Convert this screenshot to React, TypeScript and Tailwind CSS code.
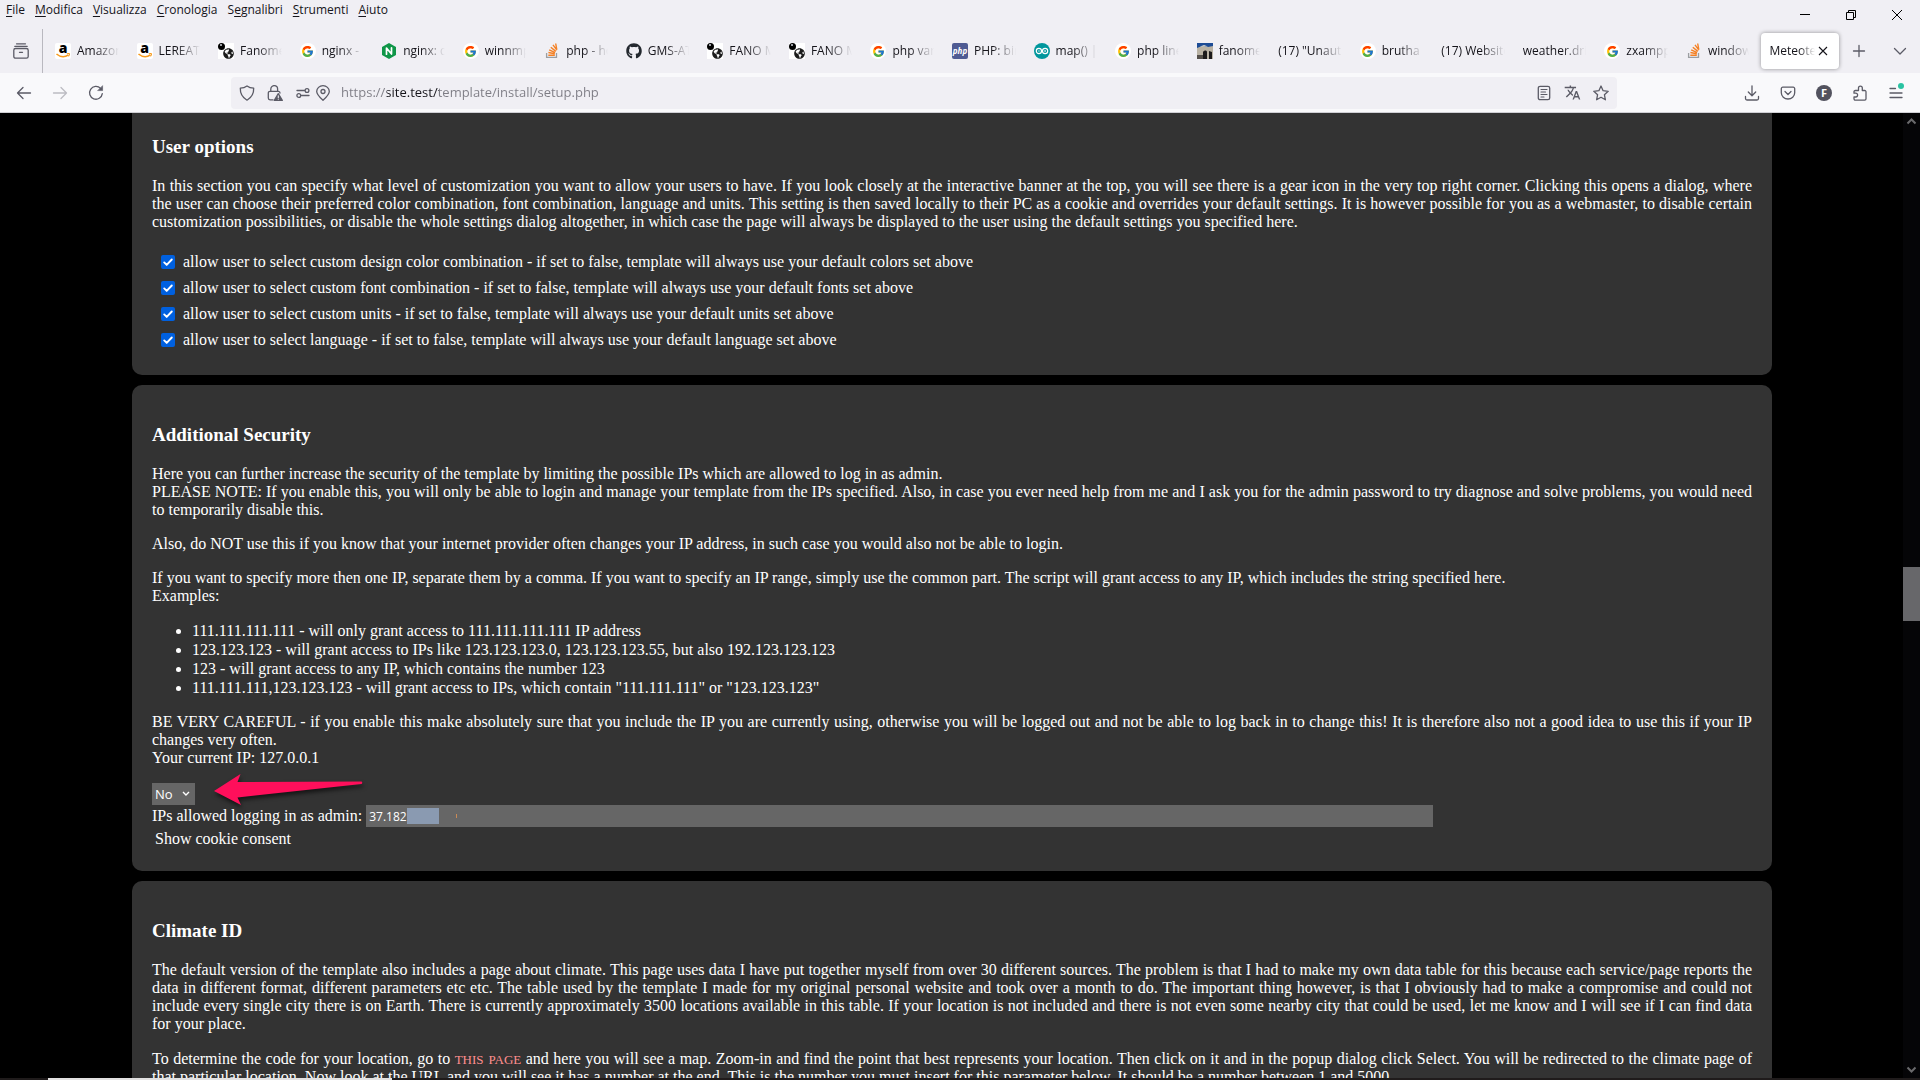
import React from "react";
import { FcGoogle } from "react-icons/fc";
import { FaGithub, FaGlobeAmericas } from "react-icons/fa";
import { MdTranslate } from "react-icons/md";

type IconProps = { children: React.ReactNode; size?: number; className?: string };

function Line({ children, size = 16, className = "" }: IconProps) {
  return (
    <svg
      width={size}
      height={size}
      viewBox="0 0 16 16"
      fill="none"
      stroke="currentColor"
      strokeWidth="1.3"
      strokeLinecap="round"
      strokeLinejoin="round"
      className={"shrink-0 " + className}
      aria-hidden="true"
    >
      {children}
    </svg>
  );
}

function Amazon() {
  return (
    <span className="relative block size-4 shrink-0 rounded-xs bg-white text-center font-['Open_Sans',sans-serif] text-[14px] leading-[10px] font-extrabold text-black">
      a
      <svg viewBox="0 0 16 16" className="absolute inset-0" fill="none" stroke="#f79a1c" strokeWidth="1.6" aria-hidden="true">
        <path d="M1.5 11c4 3.3 8.500 3.300 12 .9" />
        <path d="M11.800 10.700c1.200-.4 2.600-.3 2.700.2.100.6-.4 1.700-1 2.400" strokeWidth="1.100" />
      </svg>
    </span>
  );
}

function Google() {
  return (
    <span className="flex size-4 shrink-0 items-center justify-center rounded-full bg-white">
      <FcGoogle size={13} />
    </span>
  );
}

function Globe() {
  return (
    <span className="relative block size-4 shrink-0 bg-white">
      <span className="absolute top-0 left-0 size-[7px] rounded-full bg-black" />
      <span className="absolute top-px left-0.5 size-0.5 rounded-full bg-gray-300" />
      <FaGlobeAmericas size={11} className="absolute right-0 bottom-0 text-[#1c1c1c]" />
    </span>
  );
}

function Nginx() {
  return (
    <svg width="16" height="16" viewBox="0 0 16 16" className="shrink-0" aria-hidden="true">
      <path d="M8 0l7 4v8l-7 4-7-4V4z" fill="#0f9648" />
      <path d="M5.500 11.200V5l5 6V4.800" fill="none" stroke="#fff" strokeWidth="1.700" strokeLinecap="round" strokeLinejoin="round" />
    </svg>
  );
}

function Stack() {
  return (
    <svg width="16" height="16" viewBox="0 0 16 16" className="shrink-0" fill="none" aria-hidden="true">
      <path d="M2.600 10v4.300h9.900V10" stroke="#9c9ea1" strokeWidth="1.300" />
      <g stroke="#f48024" strokeWidth="1.400">
        <path d="M4.300 12.200h6.500M4.400 9.500l6.400 1.300M5.200 6.800l5.900 2.800M6.800 4.200l5 4.200M9 1.900l3.900 5.200M11.700.5l1.100 6.200" />
      </g>
    </svg>
  );
}

function Php() {
  return (
    <span className="flex size-4 shrink-0 items-center justify-center rounded-xs bg-[#4f5b93] font-['Open_Sans',sans-serif] text-[8px] leading-none font-bold text-white italic">
      php
    </span>
  );
}

function Arduino() {
  return (
    <svg width="16" height="16" viewBox="0 0 16 16" className="shrink-0" fill="none" stroke="#fff" strokeWidth="1.200" aria-hidden="true">
      <circle cx="8" cy="8" r="8" fill="#00979d" stroke="none" />
      <circle cx="4.900" cy="8" r="2.600" />
      <circle cx="11.100" cy="8" r="2.600" />
      <path d="M4 8h1.800M10.200 8H12M11.100 7.100v1.800" strokeWidth=".7" />
    </svg>
  );
}

function Photo() {
  return (
    <svg width="16" height="16" viewBox="0 0 16 16" className="shrink-0" aria-hidden="true">
      <path d="M0 0h16v16H0z" fill="#1d4c96" />
      <path d="M0 5l5-2 6 1 5-1v13H0z" fill="#b9b2a4" />
      <path d="M3 3.500l4-1.500 4 1.500" fill="#d9d7d0" />
      <path d="M6 16V9c1-2 4-2 4 0v7zM12 16V8l3 1v7z" fill="#1d1b1c" />
      <path d="M0 12h6v4H0z" fill="#55504b" />
    </svg>
  );
}

const tabs: { title: string; icon?: React.ReactNode }[] = [
  { title: "Amazon.it", icon: <Amazon /> },
  { title: "LEREATI", icon: <Amazon /> },
  { title: "Fanometeo", icon: <Globe /> },
  { title: "nginx - C", icon: <Google /> },
  { title: "nginx: do", icon: <Nginx /> },
  { title: "winnmp", icon: <Google /> },
  { title: "php - ho", icon: <Stack /> },
  { title: "GMS-AT", icon: <FaGithub size={16} className="shrink-0 text-[#24292f]" /> },
  { title: "FANO M", icon: <Globe /> },
  { title: "FANO M", icon: <Globe /> },
  { title: "php vari", icon: <Google /> },
  { title: "PHP: bin", icon: <Php /> },
  { title: "map() | A", icon: <Arduino /> },
  { title: "php line", icon: <Google /> },
  { title: "fanomet", icon: <Photo /> },
  { title: '(17) "Unauth' },
  { title: "brutha c", icon: <Google /> },
  { title: "(17) Website" },
  { title: "weather.driv" },
  { title: "zxampp", icon: <Google /> },
  { title: "windows", icon: <Stack /> },
];

const menus = ["File", "Modifica", "Visualizza", "Cronologia", "Segnalibri", "Strumenti", "Aiuto"];

function MenuLabel({ name }: { name: string }) {
  const key = name === "Segnalibri" ? 1 : 0;
  return (
    <>
      {name.slice(0, key)}
      <span className="underline underline-offset-2">{name[key]}</span>
      {name.slice(key + 1)}
    </>
  );
}

function IconButton({ label, children }: { label: string; children: React.ReactNode }) {
  return (
    <button type="button" aria-label={label} className="relative flex size-9 items-center justify-center">
      {children}
    </button>
  );
}

function BrowserChrome() {
  return (
    <header className="shrink-0 bg-[#f0eff4] font-['Open_Sans',sans-serif] text-[12px] text-[#15141a]">
      <div className="flex h-[29px] justify-between">
        <nav className="flex h-5 items-center gap-2.5 pl-1.5">
          {menus.map((m) => (
            <button type="button" key={m}>
              <MenuLabel name={m} />
            </button>
          ))}
        </nav>
        <div className="flex">
          <button type="button" aria-label="Minimize" className="flex w-[46px] items-center justify-center">
            <svg width="10" height="10" stroke="#000"><path d="M0 4.500h10" /></svg>
          </button>
          <button type="button" aria-label="Restore" className="flex w-[46px] items-center justify-center">
            <svg width="10" height="10" stroke="#000" fill="none"><path d="M.5 2.500h7v7h-7zM2.500 2.500v-2h7v7h-2" /></svg>
          </button>
          <button type="button" aria-label="Close window" className="flex w-[46px] items-center justify-center">
            <svg width="10" height="10" stroke="#000"><path d="M0 0l10 10M10 0L0 10" /></svg>
          </button>
        </div>
      </div>

      <div className="flex h-11">
        <button type="button" aria-label="Firefox View" className="flex w-[43px] shrink-0 items-center justify-center border-r border-[#b9b8bf] text-[#5b5b66]">
          <Line>
            <path d="M3.500 .8h9M1.800 3.400h12.400" strokeWidth="1.200" />
            <rect x=".8" y="5.500" width="14.400" height="9.700" rx="1.800" />
            <path d="M6.500 9.300h3" />
          </Line>
        </button>
        <div className="grid min-w-0 flex-1 auto-cols-[minmax(0,1fr)] grid-flow-col items-center pl-1">
          {tabs.map((t, i) => (
            <button type="button" key={i} className="flex h-9 min-w-0 items-center gap-1.5 pr-2.5 pl-2">
              {t.icon}
              <span className="min-w-0 flex-1 overflow-hidden mask-r-from-[calc(100%-24px)] text-left whitespace-nowrap">{t.title}</span>
            </button>
          ))}
          <div className="flex h-9 min-w-0 px-0.5">
            <div className="flex min-w-0 flex-1 items-center rounded-sm bg-white pr-2.5 pl-2 shadow-[0_0_4px_rgba(0,0,0,0.4)]">
              <span className="min-w-0 flex-1 overflow-hidden mask-r-from-[calc(100%-16px)] text-left whitespace-nowrap">Meteotemplate</span>
              <button type="button" aria-label="Close tab" className="pl-0.5">
                <svg width="12" height="12" viewBox="0 0 12 12" stroke="#15141a" strokeWidth="1.100"><path d="M2 2l8 8M10 2l-8 8" /></svg>
              </button>
            </div>
          </div>
        </div>
        <div className="flex w-[79px] items-center justify-between pr-0.5 text-[#5b5b66]">
          <IconButton label="New tab"><Line size={16}><path d="M8 2.500v11M2.500 8h11" /></Line></IconButton>
          <IconButton label="List all tabs"><Line><path d="M2.500 5.500L8 11l5.500-5.500" /></Line></IconButton>
        </div>
      </div>

      <div className="flex h-10 items-center border-b border-[#cfcfd4] bg-[#f9f9fb] text-[#5b5b66]">
        <div className="flex w-[231px] shrink-0 pl-1.5">
          <IconButton label="Back"><Line><path d="M14.500 8H1.500M7 2.500L1.500 8 7 13.500" /></Line></IconButton>
          <IconButton label="Forward"><Line className="text-[#bcbcc2]"><path d="M1.500 8h13M9 2.500L14.500 8 9 13.500" /></Line></IconButton>
          <IconButton label="Reload">
            <Line><path d="M14.300 8.600A6.400 6.400 0 1 1 12.600 3.400" /><path d="M14.600 1v4.600h-4.600z" fill="currentColor" strokeWidth=".6" /></Line>
          </IconButton>
        </div>
        <div className="flex h-8 min-w-0 flex-1 items-center rounded-sm bg-[#f0eff4] pr-2 pl-2">
          <Line><path d="M8 .9c2 1.500 4.300 2.100 6.700 2.200.2 5.200-2 9.500-6.700 12.100C3.300 12.600 1.100 8.300 1.300 3.100 3.700 3 6 2.400 8 .9z" /></Line>
          <Line className="ml-3">
            <path d="M3.800 6.200V4a3.400 3.400 0 0 1 6.800 0v2.200M6 14.800H3a1.700 1.700 0 0 1-1.700-1.700V8A1.700 1.700 0 0 1 3 6.300h8.500A1.700 1.700 0 0 1 13 8" />
            <path d="M11.300 8.700l4 6.700H7.300z" fill="currentColor" />
            <path d="M11.300 10.800v2M11.300 14.200v.1" stroke="#f0eff4" strokeWidth="1.100" />
          </Line>
          <Line className="ml-3"><circle cx="12" cy="5.500" r="1.900" /><circle cx="3.800" cy="10.500" r="1.900" /><path d="M2 5.500h7.500M6.500 10.500H14" /></Line>
          <Line className="ml-1"><path d="M8 15.300C4 11.500 1.700 9 1.700 6.400a6.300 5.700 0 0 1 12.600 0C14.300 9 12 11.500 8 15.300z" /><circle cx="8" cy="6.500" r="2" /></Line>
          <input
            type="text"
            aria-label="Address"
            defaultValue="https://site.test/template/install/setup.php"
            className="ml-2.5 min-w-0 flex-1 bg-[linear-gradient(to_right,#7d7c84_46px,#15141a_46px,#15141a_98px,#7d7c84_98px)] bg-clip-text text-[13px] text-transparent outline-none"
          />
          <div className="flex items-center gap-3">
            <Line><rect x="2.300" y="1.300" width="11.400" height="13.400" rx="1.800" /><path d="M5 4.500h6M5 7h4.500M5 9.500h6M5 12h3" strokeWidth="1.100" /></Line>
            <MdTranslate size={17} />
            <Line><path d="M8 1l2.100 4.700 5.100.6-3.800 3.400 1 5.100L8 12.300l-4.400 2.500 1-5.100L.8 6.300l5.100-.6z" /></Line>
          </div>
        </div>
        <div className="flex w-[303px] shrink-0 justify-end pr-1.5">
          <IconButton label="Downloads"><Line><path d="M8 .8v9.700M4.300 7L8 10.700 11.700 7M1.500 11.500v2a1.500 1.500 0 0 0 1.500 1.500h10a1.500 1.500 0 0 0 1.500-1.500v-2" /></Line></IconButton>
          <IconButton label="Save to Pocket"><Line><path d="M2.800 2.200h10.400a1.500 1.500 0 0 1 1.500 1.500v4a6.700 6.300 0 0 1-13.400 0v-4a1.500 1.500 0 0 1 1.500-1.500z" /><path d="M5 6.500l3 3 3-3" /></Line></IconButton>
          <IconButton label="Account">
            <span className="flex size-4 items-center justify-center rounded-full bg-[#52525e] text-[11px] leading-none font-bold text-white">F</span>
          </IconButton>
          <IconButton label="Extensions">
            <Line><path d="M2 7.800V7.300A1.500 1.500 0 0 1 3.500 5.500H6.500V3a1.900 1.900 0 0 1 3.800 0V5.500H12.700A1.300 1.300 0 0 1 14 6.800v7A1.300 1.300 0 0 1 12.700 15.100H3.300A1.300 1.300 0 0 1 2 13.800V12h1.700a1.900 1.900 0 0 0 0-3.800H2z" /></Line>
          </IconButton>
          <IconButton label="Application menu">
            <Line><path d="M2 3.500h5.500M2 8h12M2 12.500h12" /></Line>
            <span className="absolute top-2 right-2.5 size-1.5 rounded-full bg-[#2ac3a2]" />
          </IconButton>
        </div>
      </div>
    </header>
  );
}

const options = [
  "allow user to select custom design color combination - if set to false, template will always use your default colors set above",
  "allow user to select custom font combination - if set to false, template will always use your default fonts set above",
  "allow user to select custom units - if set to false, template will always use your default units set above",
  "allow user to select language - if set to false, template will always use your default language set above",
];

const examples = [
  "111.111.111.111 - will only grant access to 111.111.111.111 IP address",
  "123.123.123 - will grant access to IPs like 123.123.123.0, 123.123.123.55, but also 192.123.123.123",
  "123 - will grant access to any IP, which contains the number 123",
  '111.111.111,123.123.123 - will grant access to IPs, which contain "111.111.111" or "123.123.123"',
];

function Heading({ children }: { children: React.ReactNode }) {
  return <h3 className="mb-5 text-[19px] leading-[21px] font-bold">{children}</h3>;
}

function Checkbox({ label }: { label: string }) {
  return (
    <label className="flex h-[26px] items-center gap-2">
      <span className="relative block size-3.5">
        <input type="checkbox" defaultChecked className="peer block size-3.5 appearance-none rounded-xs bg-white checked:bg-[#0060df]" />
        <svg viewBox="0 0 14 14" className="pointer-events-none absolute inset-0 hidden peer-checked:block" fill="none" stroke="#fff" strokeWidth="1.900" strokeLinecap="round" strokeLinejoin="round" aria-hidden="true">
          <path d="M3.200 7.400l2.500 2.500L10.800 4.500" />
        </svg>
      </span>
      {label}
    </label>
  );
}

function ScrollBar() {
  return (
    <div className="flex w-[17px] shrink-0 flex-col items-center bg-[#050507] text-[#6a6a6c]">
      <svg width="17" height="17" fill="none" stroke="currentColor" strokeWidth="2"><path d="M4.500 10.500l4-4 4 4" /></svg>
      <div className="flex-[437]" />
      <div className="w-full flex-[54] bg-[#67676a]" />
      <div className="flex-[440]" />
      <svg width="17" height="17" fill="none" stroke="currentColor" strokeWidth="2"><path d="M4.500 6.500l4 4 4-4" /></svg>
    </div>
  );
}

export default function App() {
  return (
    <div className="flex h-screen flex-col overflow-hidden bg-black">
      <BrowserChrome />
      <div className="flex min-h-0 flex-1">
        <main className="flex min-w-0 flex-1 flex-col gap-2.5 overflow-hidden pr-[131px] pl-[132px] font-['Liberation_Serif',serif] text-[16px] leading-[18px] text-white">
          <section className="shrink-0 rounded-b-[10px] bg-[#333] px-5 pt-[23px] pb-[22px]">
            <Heading>User options</Heading>
            <p className="text-justify">
              In this section you can specify what level of customization you want to allow your users to have. If you look closely at the interactive banner at the top, you will see there is a gear icon in the very top right corner. Clicking this opens a dialog, where the user can choose their preferred color combination, font combination, language and units. This setting is then saved locally to their PC as a cookie and overrides your default settings. It is however possible for you as a webmaster, to disable certain customization possibilities, or disable the whole settings dialog altogether, in which case the page will always be displayed to the user using the default settings you specified here.
            </p>
            <div className="mt-[18px] pl-[9px]">
              {options.map((o) => (
                <Checkbox key={o} label={o} />
              ))}
            </div>
          </section>

          <section className="shrink-0 rounded-[10px] bg-[#333] px-5 pt-[39px] pb-[23px]">
            <Heading>Additional Security</Heading>
            <div className="flex flex-col gap-4 text-justify">
              <p>
                Here you can further increase the security of the template by limiting the possible IPs which are allowed to log in as admin.
                <br />
                PLEASE NOTE: If you enable this, you will only be able to login and manage your template from the IPs specified. Also, in case you ever need help from me and I ask you for the admin password to try diagnose and solve problems, you would need to temporarily disable this.
              </p>
              <p>Also, do NOT use this if you know that your internet provider often changes your IP address, in such case you would also not be able to login.</p>
              <p>
                If you want to specify more then one IP, separate them by a comma. If you want to specify an IP range, simply use the common part. The script will grant access to any IP, which includes the string specified here.
                <br />
                Examples:
              </p>
              <ul className="list-disc pl-10 leading-[19px]">
                {examples.map((e) => (
                  <li key={e}>{e}</li>
                ))}
              </ul>
              <p>
                BE VERY CAREFUL - if you enable this make absolutely sure that you include the IP you are currently using, otherwise you will be logged out and not be able to log back in to change this! It is therefore also not a good idea to use this if your IP changes very often.
                <br />
                Your current IP: 127.0.0.1
              </p>
            </div>
            <div className="relative mt-4 w-fit">
              <select aria-label="Limit admin IPs" defaultValue="No" className="block h-[22px] w-[43px] appearance-none bg-[#666] pl-[3px] font-['Open_Sans',sans-serif] text-[13px] leading-[22px] text-white">
                <option>No</option>
                <option>Yes</option>
              </select>
              <svg width="8" height="6" className="pointer-events-none absolute top-2 right-[5px]" fill="none" stroke="#fff" strokeWidth="1.400" aria-hidden="true">
                <path d="M1 1l3 3 3-3" />
              </svg>
              <svg width="154" height="40" className="pointer-events-none absolute -top-3 left-[60px] drop-shadow-[1px_3px_2px_rgba(0,0,0,0.6)]" aria-hidden="true">
                <path d="M2 20L28.500 3 25.500 11 149.500 10.500Q151 11.500 149.500 13L25.500 26.500 29 34z" fill="#ff0f5b" />
              </svg>
            </div>
            <div className="flex items-center gap-1">
              <label htmlFor="ips" className="whitespace-nowrap">IPs allowed logging in as admin:</label>
              <div className="relative w-2/3">
                <input id="ips" type="text" defaultValue="37.182" className="block h-[22px] w-full bg-[#666] pl-[3px] font-['Open_Sans',sans-serif] text-[12px] text-white outline-none" />
                <span className="pointer-events-none absolute top-[3px] left-[41px] h-4 w-8 bg-[#8a9ab1]" />
                <span className="pointer-events-none absolute top-[9px] left-[90px] h-1 w-px bg-[#c98a55]" />
              </div>
            </div>
            <p className="mt-[3px] pl-[3px]">Show cookie consent</p>
          </section>

          <section className="shrink-0 rounded-t-[10px] bg-[#333] px-5 pt-[39px]">
            <Heading>Climate ID</Heading>
            <div className="flex flex-col gap-4 text-justify">
              <p>
                The default version of the template also includes a page about climate. This page uses data I have put together myself from over 30 different sources. The problem is that I had to make my own data table for this because each service/page reports the data in different format, different parameters etc etc. The table used by the template I made for my original personal website and took over a month to do. The important thing however, is that I obviously had to make a compromise and could not include every single city there is on Earth. There is currently approximately 3500 locations available in this table. If your location is not included and there is not even some nearby city that could be used, let me know and I will see if I can find data for your place.
              </p>
              <p>
                To determine the code for your location, go to{" "}
                <a href="#climate" className="text-[18px] leading-none text-[#ff8f8f] [font-variant-caps:small-caps]">this page</a>{" "}
                and here you will see a map. Zoom-in and find the point that best represents your location. Then click on it and in the popup dialog click Select. You will be redirected to the climate page of that particular location. Now look at the URL and you will see it has a number at the end. This is the number you must insert for this parameter below. It should be a number between 1 and 5000.
              </p>
            </div>
          </section>
        </main>
        <ScrollBar />
      </div>
      <footer className="flex h-0.5 shrink-0 bg-[#1f1b1b] pl-12">
        <div className="h-full w-[344px] bg-[#e2e1e1]" />
      </footer>
    </div>
  );
}
